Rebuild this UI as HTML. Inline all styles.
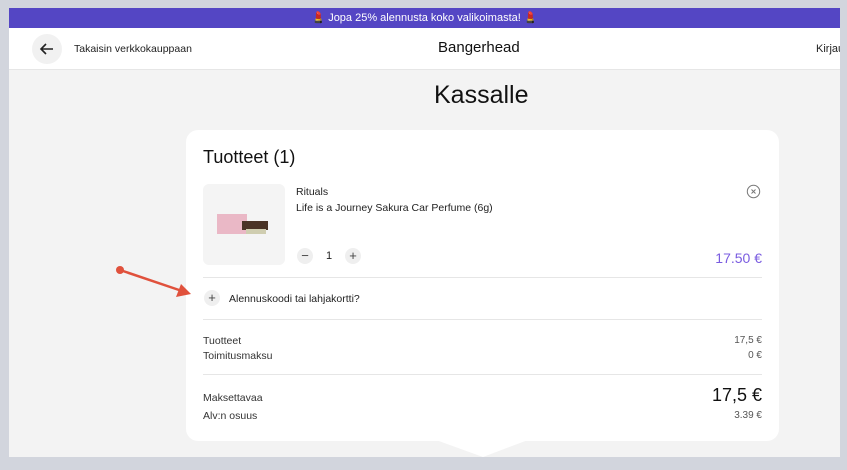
<!DOCTYPE html>
<html><head><meta charset="utf-8"><style>
*{margin:0;padding:0;box-sizing:border-box}
body{width:847px;height:470px;background:#d2d5dd;font-family:"Liberation Sans",sans-serif;position:relative;overflow:hidden;color:#222}
.page{position:absolute;left:9px;top:8px;width:831px;height:449px;background:#f3f3f3;overflow:hidden}
.bar{position:absolute;left:0;top:0;width:100%;height:20px;background:#5446c4;color:#fff;font-size:11px;text-align:center;line-height:20px}
.hdr{position:absolute;left:0;top:20px;width:100%;height:42px;background:#fff;border-bottom:1px solid #e6e6e6}
.back{position:absolute;left:23px;top:6px;width:30px;height:30px;border-radius:50%;background:#f1f1f1}
.t{position:absolute;white-space:nowrap}
.card{position:absolute;left:177px;top:122px;width:593px;height:311px;background:#fff;border-radius:12px}
.line{position:absolute;left:17px;right:17px;height:1px;background:#e6e6e6}
.circ{position:absolute;width:16px;height:16px;border-radius:50%;background:#efefef;font-size:13px;line-height:16px;text-align:center;color:#444}
</style></head><body>
<div class="page">
<div class="bar">💄 Jopa 25% alennusta koko valikoimasta! 💄</div>
<div class="hdr">
 <div class="back"><svg width="30" height="30" viewBox="0 0 30 30"><path d="M21 15H9M14 10l-5 5 5 5" stroke="#222" stroke-width="1.6" fill="none"/></svg></div>
 <div class="t" style="left:65px;top:15px;font-size:10.5px">Takaisin verkkokauppaan</div>
 <div class="t" style="left:429px;top:11px;font-size:15px;color:#111">Bangerhead</div>
 <div class="t" style="left:807px;top:15px;font-size:11px">Kirjaudu</div>
</div>
<div class="t" style="left:425px;top:73px;font-size:25px;color:#111">Kassalle</div>
<div class="card">
 <div class="t" style="left:17px;top:17px;font-size:18px;color:#111">Tuotteet (1)</div>
 <div style="position:absolute;left:17px;top:54px;width:82px;height:81px;background:#f4f4f4;border-radius:6px">
  <div style="position:absolute;left:14px;top:30px;width:30px;height:20px;background:#eab8c6"></div>
  <div style="position:absolute;left:39px;top:37px;width:26px;height:9px;background:#4a3326"></div>
  <div style="position:absolute;left:43px;top:45px;width:20px;height:5px;background:#cfcdb0"></div>
 </div>
 <div class="t" style="left:110px;top:56px;font-size:10.5px">Rituals</div>
 <div class="t" style="left:110px;top:72px;font-size:10.5px">Life is a Journey Sakura Car Perfume (6g)</div>
 <svg style="position:absolute;left:560px;top:54px" width="15" height="15" viewBox="0 0 15 15"><circle cx="7.5" cy="7.5" r="6.2" stroke="#777" fill="none"/><path d="M5.5 5.5l4 4M9.5 5.5l-4 4" stroke="#777"/></svg>
 <div class="circ" style="left:111px;top:118px">−</div>
 <div class="t" style="left:140px;top:120px;font-size:11px">1</div>
 <div class="circ" style="left:159px;top:118px">+</div>
 <div class="t" style="right:17px;top:120px;font-size:14px;color:#7a5ce0">17.50 €</div>
 <div class="line" style="top:147px"></div>
 <div class="circ" style="left:18px;top:160px">+</div>
 <div class="t" style="left:43px;top:163px;font-size:10.5px">Alennuskoodi tai lahjakortti?</div>
 <div class="line" style="top:189px"></div>
 <div class="t" style="left:17px;top:205px;font-size:10.5px;color:#333">Tuotteet</div>
 <div class="t" style="left:17px;top:220px;font-size:10.5px;color:#333">Toimitusmaksu</div>
 <div class="t" style="right:17px;top:205px;font-size:10px;color:#555">17,5 €</div>
 <div class="t" style="right:17px;top:220px;font-size:10px;color:#555">0 €</div>
 <div class="line" style="top:244px"></div>
 <div class="t" style="left:17px;top:262px;font-size:10.5px;color:#333">Maksettavaa</div>
 <div class="t" style="right:17px;top:255px;font-size:18px;color:#111">17,5 €</div>
 <div class="t" style="left:17px;top:280px;font-size:10.5px;color:#333">Alv:n osuus</div>
 <div class="t" style="right:17px;top:280px;font-size:10px;color:#555">3.39 €</div>
</div>
<svg style="position:absolute;left:427px;top:432px" width="92" height="17"><path d="M0 0H92L47 17Z" fill="#fff"/></svg>
</div>
<svg style="position:absolute;left:110px;top:262px" width="85" height="40"><circle cx="10" cy="8" r="4" fill="#e0513c"/><path d="M10 8L72 29" stroke="#e0513c" stroke-width="2.5"/><path d="M81 32L66 35L71 22Z" fill="#e0513c"/></svg>
</body></html>
